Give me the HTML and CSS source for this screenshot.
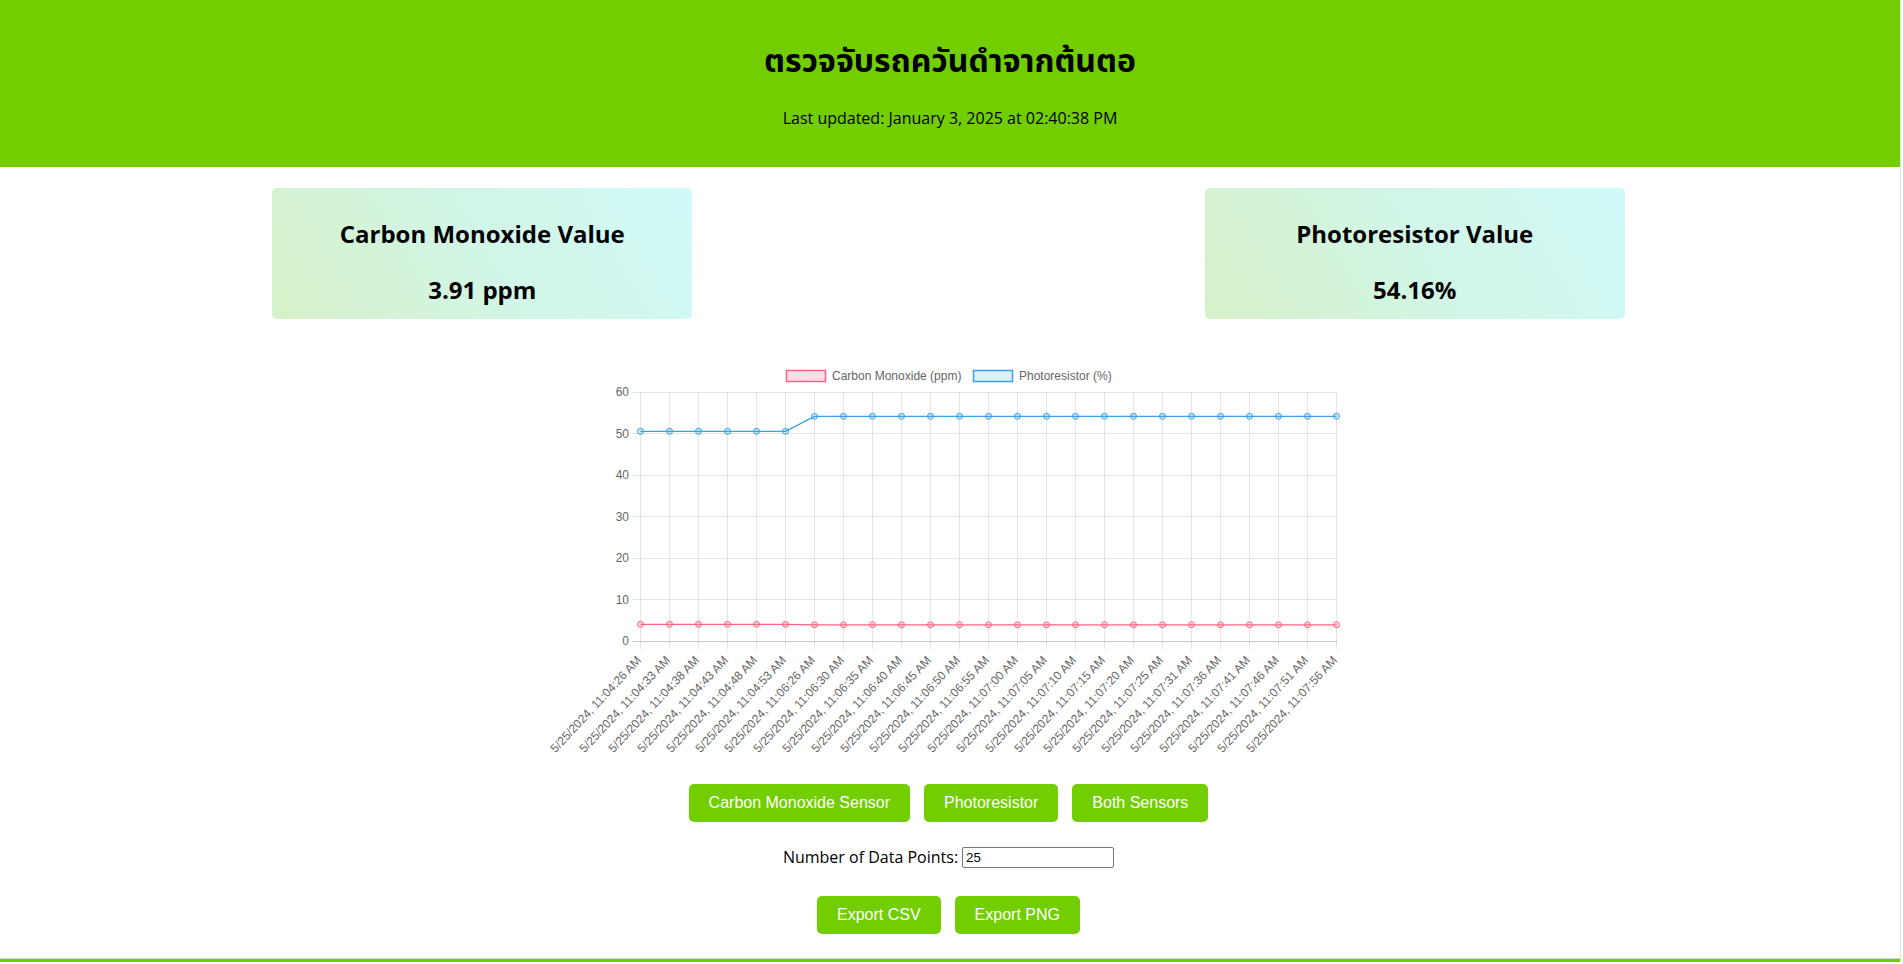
FILE: index.html
```html
<!DOCTYPE html>
<html lang="th">
<head>
    <meta charset="UTF-8">
    <meta name="viewport" content="width=device-width, initial-scale=1.0">
    <title>ตรวจจับรถควันดำจากต้นตอ</title>
    <link rel="stylesheet" href="styles.css">
</head>
<body>
<div class="page">
    <header class="site-header">
        <h1>ตรวจจับรถควันดำจากต้นตอ</h1>
        <p class="updated">Last updated: January 3, 2025 at 02:40:38 PM</p>
    </header>

    <main class="content">
        <!-- Tarjetas de valores -->
        <section class="cards">
            <div class="card">
                <h2>Carbon Monoxide Value</h2>
                <p class="value">3.91 ppm</p>
            </div>
            <div class="card">
                <h2>Photoresistor Value</h2>
                <p class="value">54.16%</p>
            </div>
        </section>

        <!-- Grafica -->
        <div class="chart-wrap">
            <svg class="chart" width="821" height="420" viewBox="0 0 821 420">
                <!-- leyenda -->
                <rect x="248.5" y="20.5" width="39" height="11" fill="rgba(255,99,132,0.2)" stroke="rgb(255,99,132)" stroke-width="1.5"/>
                <text class="legend-text" x="294" y="26">Carbon Monoxide (ppm)</text>
                <rect x="435.5" y="20.5" width="39" height="11" fill="rgba(75,192,222,0.2)" stroke="rgb(54,162,235)" stroke-width="1.5"/>
                <text class="legend-text" x="481" y="26">Photoresistor (%)</text>

                <!-- lineas horizontales -->
                <g class="grid">
                    <line x1="94" y1="42.5" x2="798" y2="42.5"/>
                    <line x1="94" y1="83.5" x2="798" y2="83.5"/>
                    <line x1="94" y1="125.5" x2="798" y2="125.5"/>
                    <line x1="94" y1="166.5" x2="798" y2="166.5"/>
                    <line x1="94" y1="208.5" x2="798" y2="208.5"/>
                    <line x1="94" y1="249.5" x2="798" y2="249.5"/>
                </g>

                <!-- lineas verticales -->
                <g class="grid">
                    <line x1="102.5" y1="42" x2="102.5" y2="299"/>
                    <line x1="131.5" y1="42" x2="131.5" y2="299"/>
                    <line x1="160.5" y1="42" x2="160.5" y2="299"/>
                    <line x1="189.5" y1="42" x2="189.5" y2="299"/>
                    <line x1="218.5" y1="42" x2="218.5" y2="299"/>
                    <line x1="247.5" y1="42" x2="247.5" y2="299"/>
                    <line x1="276.5" y1="42" x2="276.5" y2="299"/>
                    <line x1="305.5" y1="42" x2="305.5" y2="299"/>
                    <line x1="334.5" y1="42" x2="334.5" y2="299"/>
                    <line x1="363.5" y1="42" x2="363.5" y2="299"/>
                    <line x1="392.5" y1="42" x2="392.5" y2="299"/>
                    <line x1="421.5" y1="42" x2="421.5" y2="299"/>
                    <line x1="450.5" y1="42" x2="450.5" y2="299"/>
                    <line x1="479.5" y1="42" x2="479.5" y2="299"/>
                    <line x1="508.5" y1="42" x2="508.5" y2="299"/>
                    <line x1="537.5" y1="42" x2="537.5" y2="299"/>
                    <line x1="566.5" y1="42" x2="566.5" y2="299"/>
                    <line x1="595.5" y1="42" x2="595.5" y2="299"/>
                    <line x1="624.5" y1="42" x2="624.5" y2="299"/>
                    <line x1="653.5" y1="42" x2="653.5" y2="299"/>
                    <line x1="682.5" y1="42" x2="682.5" y2="299"/>
                    <line x1="711.5" y1="42" x2="711.5" y2="299"/>
                    <line x1="740.5" y1="42" x2="740.5" y2="299"/>
                    <line x1="769.5" y1="42" x2="769.5" y2="299"/>
                    <line x1="798.5" y1="42" x2="798.5" y2="299"/>
                </g>
                <line class="zero-line" x1="94" y1="291.5" x2="799" y2="291.5"/>

                <!-- eje y -->
                <g class="tick-text y-ticks">
                    <text x="91" y="42">60</text>
                    <text x="91" y="83.5">50</text>
                    <text x="91" y="125">40</text>
                    <text x="91" y="166.5">30</text>
                    <text x="91" y="208">20</text>
                    <text x="91" y="249.5">10</text>
                    <text x="91" y="291">0</text>
                </g>

                <!-- eje x -->
                <g class="tick-text x-ticks">
                    <text transform="translate(101 308) rotate(-47)">5/25/2024, 11:04:26 AM</text>
                    <text transform="translate(130 308) rotate(-47)">5/25/2024, 11:04:33 AM</text>
                    <text transform="translate(159 308) rotate(-47)">5/25/2024, 11:04:38 AM</text>
                    <text transform="translate(188 308) rotate(-47)">5/25/2024, 11:04:43 AM</text>
                    <text transform="translate(217 308) rotate(-47)">5/25/2024, 11:04:48 AM</text>
                    <text transform="translate(246 308) rotate(-47)">5/25/2024, 11:04:53 AM</text>
                    <text transform="translate(275 308) rotate(-47)">5/25/2024, 11:06:26 AM</text>
                    <text transform="translate(304 308) rotate(-47)">5/25/2024, 11:06:30 AM</text>
                    <text transform="translate(333 308) rotate(-47)">5/25/2024, 11:06:35 AM</text>
                    <text transform="translate(362 308) rotate(-47)">5/25/2024, 11:06:40 AM</text>
                    <text transform="translate(391 308) rotate(-47)">5/25/2024, 11:06:45 AM</text>
                    <text transform="translate(420 308) rotate(-47)">5/25/2024, 11:06:50 AM</text>
                    <text transform="translate(449 308) rotate(-47)">5/25/2024, 11:06:55 AM</text>
                    <text transform="translate(478 308) rotate(-47)">5/25/2024, 11:07:00 AM</text>
                    <text transform="translate(507 308) rotate(-47)">5/25/2024, 11:07:05 AM</text>
                    <text transform="translate(536 308) rotate(-47)">5/25/2024, 11:07:10 AM</text>
                    <text transform="translate(565 308) rotate(-47)">5/25/2024, 11:07:15 AM</text>
                    <text transform="translate(594 308) rotate(-47)">5/25/2024, 11:07:20 AM</text>
                    <text transform="translate(623 308) rotate(-47)">5/25/2024, 11:07:25 AM</text>
                    <text transform="translate(652 308) rotate(-47)">5/25/2024, 11:07:31 AM</text>
                    <text transform="translate(681 308) rotate(-47)">5/25/2024, 11:07:36 AM</text>
                    <text transform="translate(710 308) rotate(-47)">5/25/2024, 11:07:41 AM</text>
                    <text transform="translate(739 308) rotate(-47)">5/25/2024, 11:07:46 AM</text>
                    <text transform="translate(768 308) rotate(-47)">5/25/2024, 11:07:51 AM</text>
                    <text transform="translate(797 308) rotate(-47)">5/25/2024, 11:07:56 AM</text>
                </g>

                <!-- Monoxido de carbono -->
                <polyline class="line co" points="102.5,274.3 131.5,274.3 160.5,274.3 189.5,274.3 218.5,274.3 247.5,274.3 276.5,274.8 305.5,274.8 334.5,274.8 363.5,274.8 392.5,274.8 421.5,274.8 450.5,274.8 479.5,274.8 508.5,274.8 537.5,274.8 566.5,274.8 595.5,274.8 624.5,274.8 653.5,274.8 682.5,274.8 711.5,274.8 740.5,274.8 769.5,274.8 798.5,274.8"/>
                <g class="pts co">
                    <circle cx="102.5" cy="274.3" r="3"/><circle cx="131.5" cy="274.3" r="3"/><circle cx="160.5" cy="274.3" r="3"/>
                    <circle cx="189.5" cy="274.3" r="3"/><circle cx="218.5" cy="274.3" r="3"/><circle cx="247.5" cy="274.3" r="3"/>
                    <circle cx="276.5" cy="274.8" r="3"/><circle cx="305.5" cy="274.8" r="3"/><circle cx="334.5" cy="274.8" r="3"/>
                    <circle cx="363.5" cy="274.8" r="3"/><circle cx="392.5" cy="274.8" r="3"/><circle cx="421.5" cy="274.8" r="3"/>
                    <circle cx="450.5" cy="274.8" r="3"/><circle cx="479.5" cy="274.8" r="3"/><circle cx="508.5" cy="274.8" r="3"/>
                    <circle cx="537.5" cy="274.8" r="3"/><circle cx="566.5" cy="274.8" r="3"/><circle cx="595.5" cy="274.8" r="3"/>
                    <circle cx="624.5" cy="274.8" r="3"/><circle cx="653.5" cy="274.8" r="3"/><circle cx="682.5" cy="274.8" r="3"/>
                    <circle cx="711.5" cy="274.8" r="3"/><circle cx="740.5" cy="274.8" r="3"/><circle cx="769.5" cy="274.8" r="3"/>
                    <circle cx="798.5" cy="274.8" r="3"/>
                </g>

                <!-- Fotorresistencia -->
                <polyline class="line photo" points="102.5,81.3 131.5,81.3 160.5,81.3 189.5,81.3 218.5,81.3 247.5,81.3 276.5,66.3 305.5,66.3 334.5,66.3 363.5,66.3 392.5,66.3 421.5,66.3 450.5,66.3 479.5,66.3 508.5,66.3 537.5,66.3 566.5,66.3 595.5,66.3 624.5,66.3 653.5,66.3 682.5,66.3 711.5,66.3 740.5,66.3 769.5,66.3 798.5,66.3"/>
                <g class="pts photo">
                    <circle cx="102.5" cy="81.3" r="3"/><circle cx="131.5" cy="81.3" r="3"/><circle cx="160.5" cy="81.3" r="3"/>
                    <circle cx="189.5" cy="81.3" r="3"/><circle cx="218.5" cy="81.3" r="3"/><circle cx="247.5" cy="81.3" r="3"/>
                    <circle cx="276.5" cy="66.3" r="3"/><circle cx="305.5" cy="66.3" r="3"/><circle cx="334.5" cy="66.3" r="3"/>
                    <circle cx="363.5" cy="66.3" r="3"/><circle cx="392.5" cy="66.3" r="3"/><circle cx="421.5" cy="66.3" r="3"/>
                    <circle cx="450.5" cy="66.3" r="3"/><circle cx="479.5" cy="66.3" r="3"/><circle cx="508.5" cy="66.3" r="3"/>
                    <circle cx="537.5" cy="66.3" r="3"/><circle cx="566.5" cy="66.3" r="3"/><circle cx="595.5" cy="66.3" r="3"/>
                    <circle cx="624.5" cy="66.3" r="3"/><circle cx="653.5" cy="66.3" r="3"/><circle cx="682.5" cy="66.3" r="3"/>
                    <circle cx="711.5" cy="66.3" r="3"/><circle cx="740.5" cy="66.3" r="3"/><circle cx="769.5" cy="66.3" r="3"/>
                    <circle cx="798.5" cy="66.3" r="3"/>
                </g>
            </svg>
        </div>

        <div class="controls">
            <button class="btn">Carbon Monoxide Sensor</button>
            <button class="btn">Photoresistor</button>
            <button class="btn">Both Sensors</button>
        </div>

        <div class="points">
            <label for="dataPoints">Number of Data Points:</label>
            <input type="text" id="dataPoints" class="points-input" value="25">
        </div>

        <div class="controls export">
            <button class="btn">Export CSV</button>
            <button class="btn">Export PNG</button>
        </div>
    </main>

    <footer class="site-footer"></footer>
</div>
</body>
</html>
```

FILE: styles.css
```css
/* Estilos generales */
* {
    margin: 0;
    padding: 0;
    box-sizing: border-box;
}

body {
    font-family: 'Open Sans', 'Noto Sans Thai', 'Noto Sans', sans-serif;
    background-color: #fff;
    color: #000;
    overflow: hidden;
}

.page {
    margin-right: 2px;
    border-right: 1px solid #e2e2e2;
}

/* Cabecera */
.site-header {
    background-color: #72ce00;
    text-align: center;
    padding: 38px 20px 38px;
}

.site-header h1 {
    font-size: 32px;
    line-height: 44px;
    font-weight: 700;
}

.updated {
    margin-top: 25px;
    font-size: 16px;
    line-height: 22px;
}

.content {
    margin-right: 3px;
}

/* Tarjetas */
.cards {
    display: flex;
    justify-content: space-around;
    padding: 0 16px;
    margin-top: 21px;
}

.card {
    width: 420px;
    padding: 9px 20px 13px;
    border-radius: 5px;
    text-align: center;
    background: linear-gradient(60deg, #d6f1c8 0%, #d2f6e6 50%, #d0faf9 100%);
}

.card h2 {
    font-size: 24px;
    line-height: 33px;
    font-weight: 700;
    margin: 20px 0 23px;
}

.card .value {
    font-size: 24px;
    line-height: 33px;
    font-weight: 700;
}

/* Grafica */
.chart-wrap {
    display: flex;
    justify-content: center;
    margin-top: 31px;
}

.chart {
    display: block;
    font-family: 'Liberation Sans', Arial, sans-serif;
}

.grid line {
    stroke: rgba(0, 0, 0, 0.1);
    stroke-width: 1;
    shape-rendering: crispEdges;
}

.zero-line {
    stroke: rgba(0, 0, 0, 0.22);
    stroke-width: 1;
    shape-rendering: crispEdges;
}

.legend-text,
.tick-text text {
    font-size: 12px;
    fill: #666;
    dominant-baseline: central;
}

.y-ticks text,
.x-ticks text {
    text-anchor: end;
}

.line {
    fill: none;
    stroke-width: 1.3;
}

.line.co {
    stroke: rgb(255, 99, 132);
}

.line.photo {
    stroke: rgb(54, 162, 235);
}

.pts circle {
    stroke-width: 1;
}

.pts.co circle {
    fill: rgba(255, 99, 132, 0.2);
    stroke: rgb(255, 99, 132);
}

.pts.photo circle {
    fill: rgba(54, 162, 235, 0.2);
    stroke: rgb(54, 162, 235);
}

/* Botones */
.controls {
    display: flex;
    justify-content: center;
    gap: 14px;
    margin-top: 14px;
}

.controls.export {
    margin-top: 28px;
}

.btn {
    font-family: 'Liberation Sans', Arial, sans-serif;
    font-size: 16px;
    line-height: 18px;
    color: #fff;
    background-color: #72ce00;
    border: none;
    border-radius: 5px;
    padding: 10px 20px;
    cursor: pointer;
}

.points {
    display: flex;
    justify-content: center;
    align-items: center;
    gap: 4px;
    margin-top: 24px;
    height: 22px;
    font-size: 16px;
}

.points-input {
    width: 152px;
    height: 21px;
    padding: 1px 3px;
    border: 1px solid #767676;
    border-radius: 2px;
    font-family: 'Liberation Sans', Arial, sans-serif;
    font-size: 13.33px;
}

/* Pie */
.site-footer {
    margin-top: 24px;
    height: 4px;
    border-top: 1px solid #d8d8d8;
    background-color: #72ce00;
}
```
